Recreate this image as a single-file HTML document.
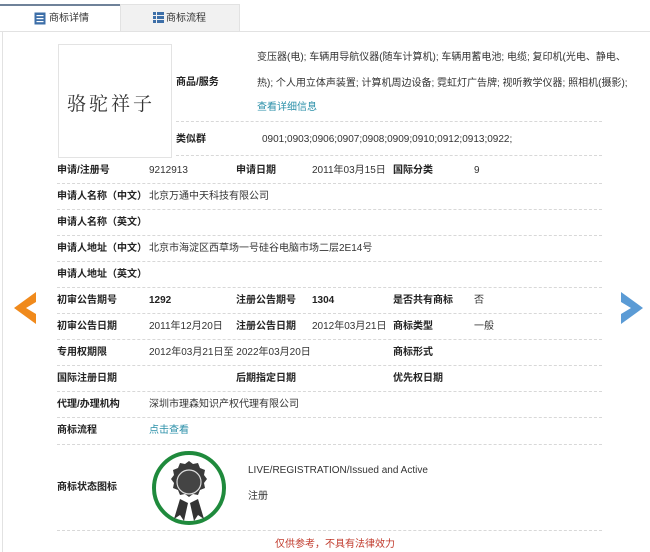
<!DOCTYPE html>
<html><head><meta charset="utf-8"><style>
body{margin:0;width:650px;height:552px;background:#fff;font-family:"Liberation Sans","Noto Sans CJK SC",sans-serif;font-size:10px;color:#333;position:relative;overflow:hidden}
.a{position:absolute;white-space:nowrap;line-height:12px}
.b{font-weight:bold;color:#222}
.d{position:absolute;left:57px;width:545px;border-top:1px dashed #d8d8d8;height:0}
</style></head><body>
<div class="a" style="left:0;top:4px;width:120px;height:28px;border-top:2px solid #6f8299;background:#fff"></div>
<div class="a" style="left:120px;top:4px;width:118px;height:27px;background:#f1f1f1;border:1px solid #e2e2e2;border-bottom:none"></div>
<div class="a" style="left:0;top:31px;width:650px;border-top:1px solid #e2e2e2"></div>
<div class="a" style="left:2px;top:31px;width:0;height:521px;border-left:1px solid #e2e2e2"></div>
<svg class="a" style="left:34px;top:12px" width="12" height="13"><rect x="0.5" y="0.5" width="11" height="12" fill="#3d6fa8"/><rect x="2.5" y="3" width="7" height="1.2" fill="#fff"/><rect x="2.5" y="6" width="7" height="1.2" fill="#fff"/><rect x="2.5" y="9" width="7" height="1.2" fill="#fff"/></svg>
<div class="a" style="left:49px;top:13px">商标详情</div>
<svg class="a" style="left:153px;top:12px" width="11" height="11"><g fill="#3d6fa8"><rect x="0" y="0" width="3" height="3"/><rect x="4" y="0" width="7" height="3"/><rect x="0" y="4" width="3" height="3"/><rect x="4" y="4" width="7" height="3"/><rect x="0" y="8" width="3" height="3"/><rect x="4" y="8" width="7" height="3"/></g></svg>
<div class="a" style="left:166px;top:13px">商标流程</div>

<div class="a" style="left:58px;top:44px;width:112px;height:112px;border:1px solid #e3e3e3;background:#fff"></div>
<div class="a" style="left:67px;top:92px;font-family:'Noto Serif CJK SC',serif;font-size:19px;line-height:22px;color:#333;letter-spacing:3px">骆驼祥子</div>

<div class="a b" style="left:176px;top:77px">商品/服务</div>
<div class="a" style="left:257px;top:52px">变压器(电); 车辆用导航仪器(随车计算机); 车辆用蓄电池; 电缆; 复印机(光电、静电、</div>
<div class="a" style="left:257px;top:78px">热); 个人用立体声装置; 计算机周边设备; 霓虹灯广告牌; 视听教学仪器; 照相机(摄影);</div>
<div class="a" style="left:257px;top:102px;color:#2a8fa8">查看详细信息</div>
<div class="d" style="left:176px;width:426px;top:121px"></div>
<div class="a b" style="left:176px;top:134px">类似群</div>
<div class="a" style="left:262px;top:134px">0901;0903;0906;0907;0908;0909;0910;0912;0913;0922;</div>
<div class="d" style="left:176px;width:426px;top:155px"></div>

<div class="a b" style="left:57px;top:165px">申请/注册号</div><div class="a" style="left:149px;top:165px">9212913</div>
<div class="a b" style="left:236px;top:165px">申请日期</div><div class="a" style="left:312px;top:165px">2011年03月15日</div>
<div class="a b" style="left:393px;top:165px">国际分类</div><div class="a" style="left:474px;top:165px">9</div>
<div class="d" style="top:183px"></div>
<div class="a b" style="left:57px;top:191px">申请人名称（中文）</div><div class="a" style="left:149px;top:191px">北京万通中天科技有限公司</div>
<div class="d" style="top:209px"></div>
<div class="a b" style="left:57px;top:217px">申请人名称（英文）</div>
<div class="d" style="top:235px"></div>
<div class="a b" style="left:57px;top:243px">申请人地址（中文）</div><div class="a" style="left:149px;top:243px">北京市海淀区西草场一号硅谷电脑市场二层2E14号</div>
<div class="d" style="top:261px"></div>
<div class="a b" style="left:57px;top:269px">申请人地址（英文）</div>
<div class="d" style="top:287px"></div>
<div class="a b" style="left:57px;top:295px">初审公告期号</div><div class="a b" style="left:149px;top:295px">1292</div>
<div class="a b" style="left:236px;top:295px">注册公告期号</div><div class="a b" style="left:312px;top:295px">1304</div>
<div class="a b" style="left:393px;top:295px">是否共有商标</div><div class="a" style="left:474px;top:295px">否</div>
<div class="d" style="top:313px"></div>
<div class="a b" style="left:57px;top:321px">初审公告日期</div><div class="a" style="left:149px;top:321px">2011年12月20日</div>
<div class="a b" style="left:236px;top:321px">注册公告日期</div><div class="a" style="left:312px;top:321px">2012年03月21日</div>
<div class="a b" style="left:393px;top:321px">商标类型</div><div class="a" style="left:474px;top:321px">一般</div>
<div class="d" style="top:339px"></div>
<div class="a b" style="left:57px;top:347px">专用权期限</div><div class="a" style="left:149px;top:347px">2012年03月21日至 2022年03月20日</div>
<div class="a b" style="left:393px;top:347px">商标形式</div>
<div class="d" style="top:365px"></div>
<div class="a b" style="left:57px;top:373px">国际注册日期</div>
<div class="a b" style="left:236px;top:373px">后期指定日期</div>
<div class="a b" style="left:393px;top:373px">优先权日期</div>
<div class="d" style="top:391px"></div>
<div class="a b" style="left:57px;top:399px">代理/办理机构</div><div class="a" style="left:149px;top:399px">深圳市理森知识产权代理有限公司</div>
<div class="d" style="top:417px"></div>
<div class="a b" style="left:57px;top:425px">商标流程</div><div class="a" style="left:149px;top:425px;color:#2a8fa8">点击查看</div>
<div class="d" style="top:444px"></div>
<div class="a b" style="left:57px;top:482px">商标状态图标</div>
<svg class="a" style="left:150px;top:449px" width="78" height="78" viewBox="0 0 78 78">
<circle cx="39" cy="39" r="35" fill="#fff" stroke="#1f8a3c" stroke-width="4"/>
<path d="M30 50 L24 70 L30 66 L34 72 L38 54 Z M48 50 L54 70 L48 66 L44 72 L40 54 Z" fill="#333"/>
<path d="M39 12 l4 3 5 -1 2 5 5 2 -1 5 3 4 -3 4 1 5 -5 2 -2 5 -5 -1 -4 3 -4 -3 -5 1 -2 -5 -5 -2 1 -5 -3 -4 3 -4 -1 -5 5 -2 2 -5 5 1 z" fill="#3a3a3a"/>
<circle cx="39" cy="33" r="12" fill="#444" stroke="#ddd" stroke-width="1.2"/>
</svg>
<div class="a" style="left:248px;top:465px">LIVE/REGISTRATION/Issued and Active</div>
<div class="a" style="left:248px;top:491px">注册</div>
<div class="d" style="top:530px"></div>
<div class="a" style="left:275px;top:539px;color:#c0392b">仅供参考，不具有法律效力</div>

<svg class="a" style="left:14px;top:292px" width="22" height="32"><path d="M22 0 L0 16 L22 32 L22 22 L12 16 L22 10Z" fill="#f08a1c"/></svg>
<svg class="a" style="left:621px;top:292px" width="22" height="32"><path d="M0 0 L22 16 L0 32 L0 22 L10 16 L0 10Z" fill="#5b9bd5"/></svg>
</body></html>
